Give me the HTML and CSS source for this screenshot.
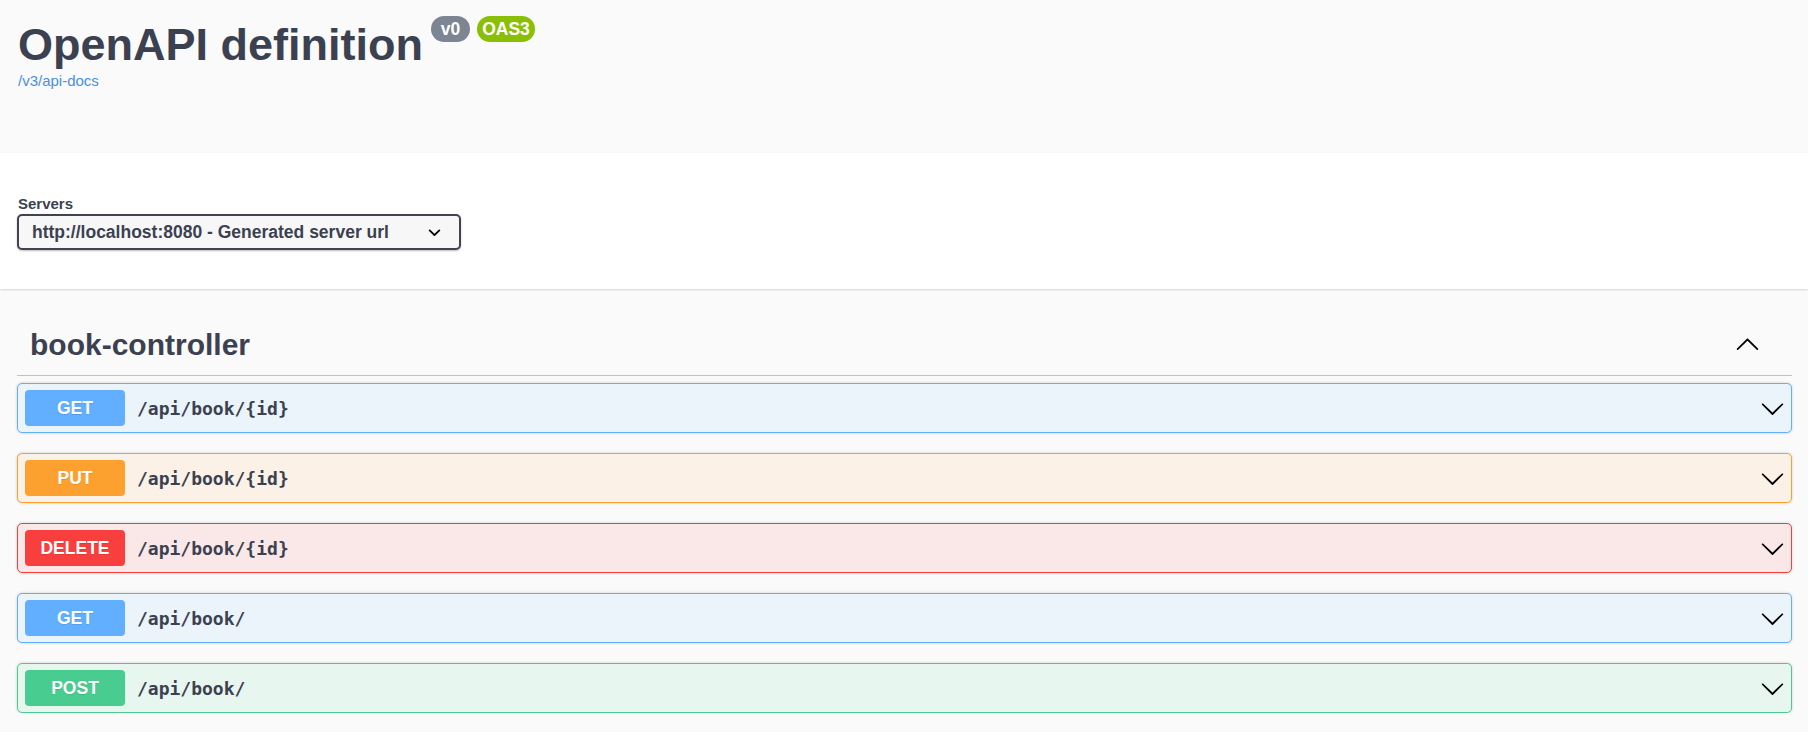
FILE: index.html
```html
<!DOCTYPE html>
<html lang="en">
<head>
<meta charset="utf-8">
<title>Swagger UI</title>
<link rel="stylesheet" href="styles.css">
</head>
<body>
<section class="info">
  <div class="title-row">
    <h2 class="title">OpenAPI definition</h2>
    <div class="badges">
      <small class="badge badge-version"><pre class="version"> v0 </pre></small>
      <small class="badge badge-oas"><pre class="version">OAS3</pre></small>
    </div>
  </div>
  <a class="url" href="#">/v3/api-docs</a>
</section>

<section class="scheme">
  <div class="wrapper">
    <div class="servers-title">Servers</div>
    <div class="select">
      <span>http://localhost:8080 - Generated server url</span>
      <svg class="select-arrow" viewBox="0 0 20 20" width="25" height="25"><path d="M13.418 7.859a.695.695 0 01.978 0 .68.68 0 010 .969l-3.908 3.83a.697.697 0 01-.979 0l-3.908-3.830a.68.68 0 010-.969.695.695 0 01.978 0L10 11l3.418-3.141z" fill="#000"/></svg>
    </div>
  </div>
</section>

<section class="tags">
  <div class="tag-header">
    <h3 class="tag-name">book-controller</h3>
    <svg class="arrow" viewBox="0 0 20 20" width="25" height="25"><path d="M17.418 14.908c.272.268.709.268.979 0s.271-.701 0-.969l-7.908-7.83c-.27-.268-.707-.268-.979 0l-7.908 7.83c-.27.268-.27.701 0 .969.271.268.709.268.979 0L10 7.767l7.418 7.141z" fill="#000"/></svg>
  </div>
  <div class="ops">
    <div class="op op-get">
      <span class="method">GET</span>
      <span class="path">/api/book/{id}</span>
      <svg class="arrow" viewBox="0 0 20 20" width="25" height="25"><path d="M17.418 6.109c.272-.268.709-.268.979 0s.271.701 0 .969l-7.908 7.83c-.27.268-.707.268-.979 0l-7.908-7.83c-.27-.268-.27-.701 0-.969.271-.268.709-.268.979 0L10 13.25l7.418-7.141z" fill="#000"/></svg>
    </div>
    <div class="op op-put">
      <span class="method">PUT</span>
      <span class="path">/api/book/{id}</span>
      <svg class="arrow" viewBox="0 0 20 20" width="25" height="25"><path d="M17.418 6.109c.272-.268.709-.268.979 0s.271.701 0 .969l-7.908 7.83c-.27.268-.707.268-.979 0l-7.908-7.83c-.27-.268-.27-.701 0-.969.271-.268.709-.268.979 0L10 13.25l7.418-7.141z" fill="#000"/></svg>
    </div>
    <div class="op op-delete">
      <span class="method">DELETE</span>
      <span class="path">/api/book/{id}</span>
      <svg class="arrow" viewBox="0 0 20 20" width="25" height="25"><path d="M17.418 6.109c.272-.268.709-.268.979 0s.271.701 0 .969l-7.908 7.83c-.27.268-.707.268-.979 0l-7.908-7.83c-.27-.268-.27-.701 0-.969.271-.268.709-.268.979 0L10 13.25l7.418-7.141z" fill="#000"/></svg>
    </div>
    <div class="op op-get">
      <span class="method">GET</span>
      <span class="path">/api/book/</span>
      <svg class="arrow" viewBox="0 0 20 20" width="25" height="25"><path d="M17.418 6.109c.272-.268.709-.268.979 0s.271.701 0 .969l-7.908 7.83c-.27.268-.707.268-.979 0l-7.908-7.83c-.27-.268-.27-.701 0-.969.271-.268.709-.268.979 0L10 13.25l7.418-7.141z" fill="#000"/></svg>
    </div>
    <div class="op op-post">
      <span class="method">POST</span>
      <span class="path">/api/book/</span>
      <svg class="arrow" viewBox="0 0 20 20" width="25" height="25"><path d="M17.418 6.109c.272-.268.709-.268.979 0s.271.701 0 .969l-7.908 7.83c-.27.268-.707.268-.979 0l-7.908-7.83c-.27-.268-.27-.701 0-.969.271-.268.709-.268.979 0L10 13.25l7.418-7.141z" fill="#000"/></svg>
    </div>
  </div>
</section>
</body>
</html>
```

FILE: styles.css
```css
* { box-sizing: border-box; }

body {
  margin: 0;
  background: #fafafa;
  color: #3b4151;
  font-family: "Liberation Sans", Arial, sans-serif;
}

.info {
  height: 153px;
  padding: 20px 16px 0 18px;
}

.title-row {
  display: flex;
  align-items: flex-start;
}

.title {
  margin: 0;
  font-size: 45px;
  line-height: 50px;
  font-weight: 700;
  color: #3b4151;
}

.badges {
  display: flex;
  gap: 7px;
  margin-left: 8px;
  margin-top: -4px;
}

.badge {
  display: inline-block;
  height: 26px;
  padding: 3px 5px;
  border-radius: 57px;
}

.badge-version { background: #7d8492; }
.badge-oas { background: #89bf04; }

.version {
  margin: 0;
  color: #fff;
  font-family: "Liberation Sans", Arial, sans-serif;
  font-size: 17.5px;
  line-height: 20px;
  font-weight: 700;
  white-space: pre;
}

.url {
  display: block;
  margin-top: 2px;
  font-size: 15px;
  line-height: 18px;
  color: #4990e2;
  text-decoration: none;
}

.scheme {
  background: #fff;
  box-shadow: 0 1px 2px 0 rgba(0, 0, 0, .15);
  padding: 42px 16px 39px 17px;
  height: 136px;
}

.servers-title {
  font-size: 15px;
  line-height: 18px;
  font-weight: 700;
  margin-left: 1px;
  margin-bottom: 1px;
}

.select {
  width: 444px;
  height: 36px;
  display: flex;
  align-items: center;
  justify-content: space-between;
  padding: 0 12px 0 13px;
  border: 2px solid #41444e;
  border-radius: 5px;
  background: #f7f7f7;
  box-shadow: 0 1px 2px 0 rgba(0, 0, 0, .25);
  font-size: 17.5px;
  font-weight: 700;
  color: #3b4151;
}

.tags {
  padding: 0 16px 0 17px;
}

.tag-header {
  display: flex;
  align-items: center;
  justify-content: space-between;
  padding: 38px 32px 12px 13px;
  border-bottom: 1px solid rgba(59, 65, 81, .3);
}

.tag-name {
  margin: 0;
  font-size: 30px;
  line-height: 36px;
  font-weight: 700;
}

.tag-header .arrow {
  margin-top: -4px;
}

.ops {
  display: flex;
  flex-direction: column;
  gap: 20px;
  padding-top: 7px;
}

.op {
  display: flex;
  align-items: center;
  height: 50px;
  padding: 0 6px 0 7px;
  border: 1px solid;
  border-radius: 5px;
  box-shadow: 0 0 3px rgba(0, 0, 0, .19);
}

.method {
  width: 100px;
  height: 36px;
  line-height: 36px;
  text-align: center;
  border-radius: 4px;
  color: #fff;
  font-size: 17.5px;
  font-weight: 700;
  text-shadow: 0 1px 0 rgba(0, 0, 0, .1);
}

.path {
  flex: 1;
  margin-left: 12px;
  font-family: "DejaVu Sans Mono", "Liberation Mono", monospace;
  font-size: 18px;
  font-weight: 700;
  color: #3b4151;
}

.op-get { background: #ebf3fb; border-color: #61affe; }
.op-get .method { background: #61affe; }
.op-put { background: #fbf1e6; border-color: #fca130; }
.op-put .method { background: #fca130; }
.op-delete { background: #fae7e7; border-color: #f93e3e; }
.op-delete .method { background: #f93e3e; }
.op-post { background: #e8f6f0; border-color: #49cc90; }
.op-post .method { background: #49cc90; }
```
